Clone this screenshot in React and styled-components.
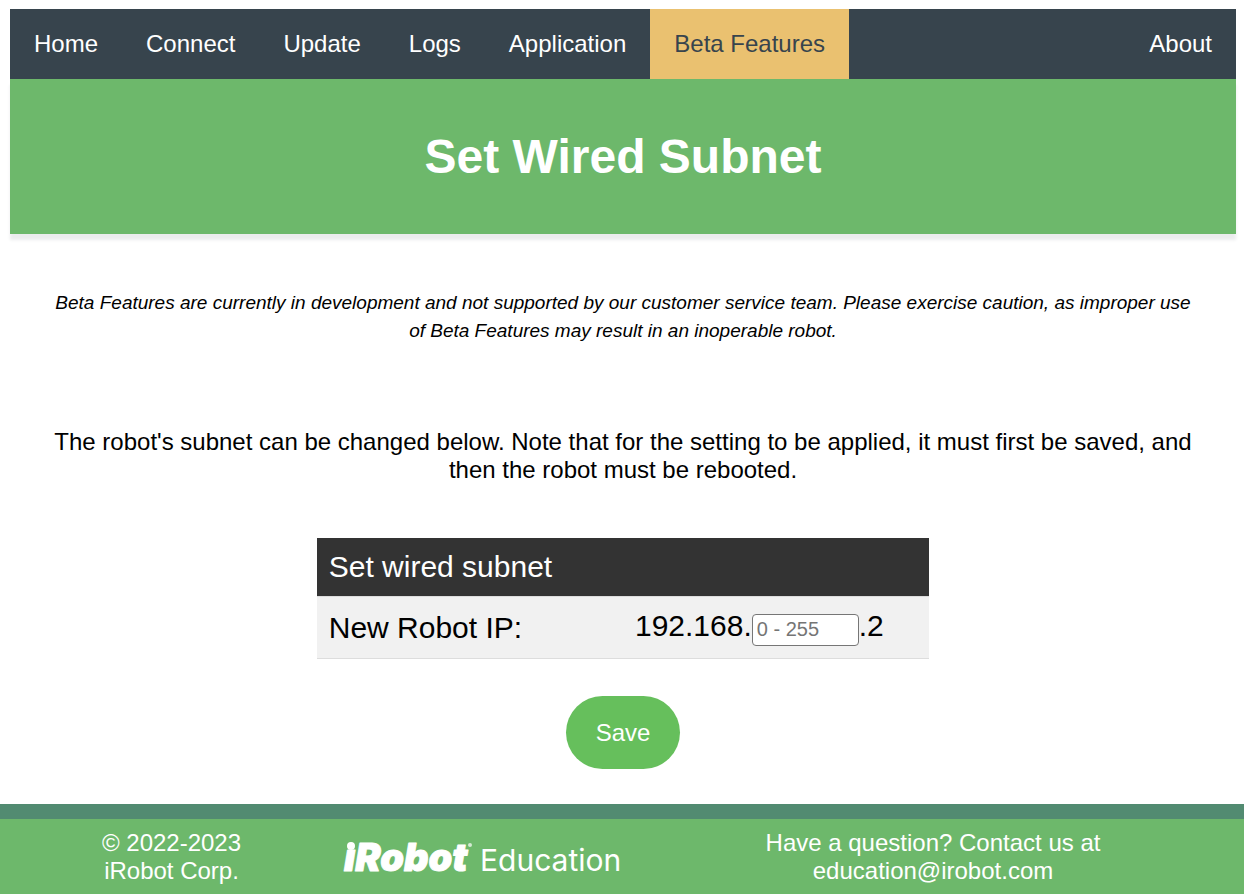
import React from 'react';
import styled, { createGlobalStyle } from 'styled-components';

const GlobalStyle = createGlobalStyle`
  *, *::before, *::after { box-sizing: border-box; }
  body {
    margin: 0;
    background: #fff;
    color: #000;
    font: 24px/28px "Liberation Sans", Arial, sans-serif;
  }
`;

const Page = styled.div`
  display: flex;
  flex-direction: column;
  min-height: 100vh;
  padding-right: 1px;
`;

const Shell = styled.div`
  flex: 1;
  margin: 9px 8px 0 10px;
`;

const Nav = styled.nav`
  display: flex;
  background: #37444d;
`;

const NavLink = styled.a`
  padding: 21px 24px;
  text-decoration: none;
  color: ${(p) => (p.$active ? '#37444d' : '#fff')};
  background: ${(p) => (p.$active ? '#eac170' : 'transparent')};
  margin-left: ${(p) => (p.$end ? 'auto' : '0')};
`;

const Banner = styled.header`
  padding: 50px 24px 49px;
  background: #6db86b;
  box-shadow: 0 6px 3px rgba(55, 68, 77, 0.1);
  color: #fff;
  text-align: center;
`;

const Title = styled.h1`
  margin: 0;
  font-size: 48px;
  line-height: 56px;
`;

const Main = styled.main`
  display: flex;
  flex-direction: column;
  align-items: center;
  padding: 55px 24px 34px;
  text-align: center;
`;

const Notice = styled.p`
  margin: 0;
  padding: 0 12px;
  font-size: 19px;
  font-style: italic;
`;

const Intro = styled.p`
  margin: 83px 0 54px;
`;

const Form = styled.form`
  display: flex;
  flex-direction: column;
  align-items: center;
  width: 52%;
  gap: 37px;
`;

const Table = styled.table`
  width: 100%;
  border-collapse: collapse;
  font-size: 30px;
  line-height: 34px;
  text-align: left;
`;

const HeadCell = styled.th`
  padding: 12px;
  background: #333;
  color: #fff;
  font-weight: 400;
`;

const Row = styled.tr`
  background: #f1f1f1;
  border-top: 1px solid #ddd;
  border-bottom: 1px solid #ddd;
`;

const Cell = styled.td`
  width: 50%;
  padding: 12px;
`;

const Address = styled.div`
  display: flex;
  align-items: flex-start;
  height: 37px;
`;

const Octet = styled.input`
  width: 107px;
  height: 32px;
  margin: 5px 0 0;
  padding: 0 4px 2px;
  border: 1px solid #767676;
  border-radius: 4px;
  background: #fff;
  font: 20px "Liberation Sans", Arial, sans-serif;
  &::placeholder { color: #757575; }
`;

const SaveButton = styled.button`
  padding: 23px 30px 22px;
  border: 0;
  border-radius: 40px;
  background: #66bf5c;
  color: #fff;
  font: inherit;
  cursor: pointer;
`;

const Footer = styled.footer`
  display: flex;
  align-items: center;
  border-top: 15px solid #528b71;
  background: #6db86b;
  color: #fff;
  text-align: center;
`;

const FooterText = styled.p`
  flex: ${(p) => (p.$wide ? '0 0 50%' : '1')};
  margin: 0;
  padding: 10px 0 9px;
`;

const Mail = styled.a`
  color: inherit;
  text-decoration: none;
`;

const Logo = styled.svg`
  flex: none;
  display: block;
`;

const Wordmark = styled.text`
  font: italic 900 38px Inter, sans-serif;
  stroke: #fff;
  stroke-width: 1px;
  stroke-linejoin: round;
`;

const Division = styled.text`
  font: 400 30px Inter, sans-serif;
`;

function BrandLogo() {
  return (
    <Logo width="279" height="46" viewBox="0 0 279 46" fill="#fff" role="img" aria-label="iRobot Education">
      <Wordmark x="1" y="37">
        ıRobot
      </Wordmark>
      <circle cx="8" cy="12" r="4" />
      <circle cx="127" cy="11" r="2" opacity="0.7" />
      <Division x="137" y="37">
        Education
      </Division>
    </Logo>
  );
}

const links = ['Home', 'Connect', 'Update', 'Logs', 'Application', 'Beta Features', 'About'];

export default function App() {
  return (
    <Page>
      <GlobalStyle />
      <Shell>
        <Nav>
          {links.map((name) => (
            <NavLink key={name} href="#" $active={name === 'Beta Features'} $end={name === 'About'}>
              {name}
            </NavLink>
          ))}
        </Nav>
        <Banner>
          <Title>Set Wired Subnet</Title>
        </Banner>
        <Main>
          <Notice>
            Beta Features are currently in development and not supported by our customer service team. Please
            exercise caution, as improper use of Beta Features may result in an inoperable robot.
          </Notice>
          <Intro>
            The robot's subnet can be changed below. Note that for the setting to be applied, it must first be
            saved, and then the robot must be rebooted.
          </Intro>
          <Form onSubmit={(e) => e.preventDefault()}>
            <Table>
              <thead>
                <tr>
                  <HeadCell colSpan={2}>Set wired subnet</HeadCell>
                </tr>
              </thead>
              <tbody>
                <Row>
                  <Cell>
                    <label htmlFor="octet">New Robot IP:</label>
                  </Cell>
                  <Cell>
                    <Address>
                      <span>192.168.</span>
                      <Octet id="octet" type="text" placeholder="0 - 255" />
                      <span>.2</span>
                    </Address>
                  </Cell>
                </Row>
              </tbody>
            </Table>
            <SaveButton type="submit">Save</SaveButton>
          </Form>
        </Main>
      </Shell>
      <Footer>
        <FooterText>
          © 2022-2023
          <br />
          iRobot Corp.
        </FooterText>
        <BrandLogo />
        <FooterText $wide>
          Have a question? Contact us at
          <br />
          <Mail href="mailto:education@irobot.com">education@irobot.com</Mail>
        </FooterText>
      </Footer>
    </Page>
  );
}
